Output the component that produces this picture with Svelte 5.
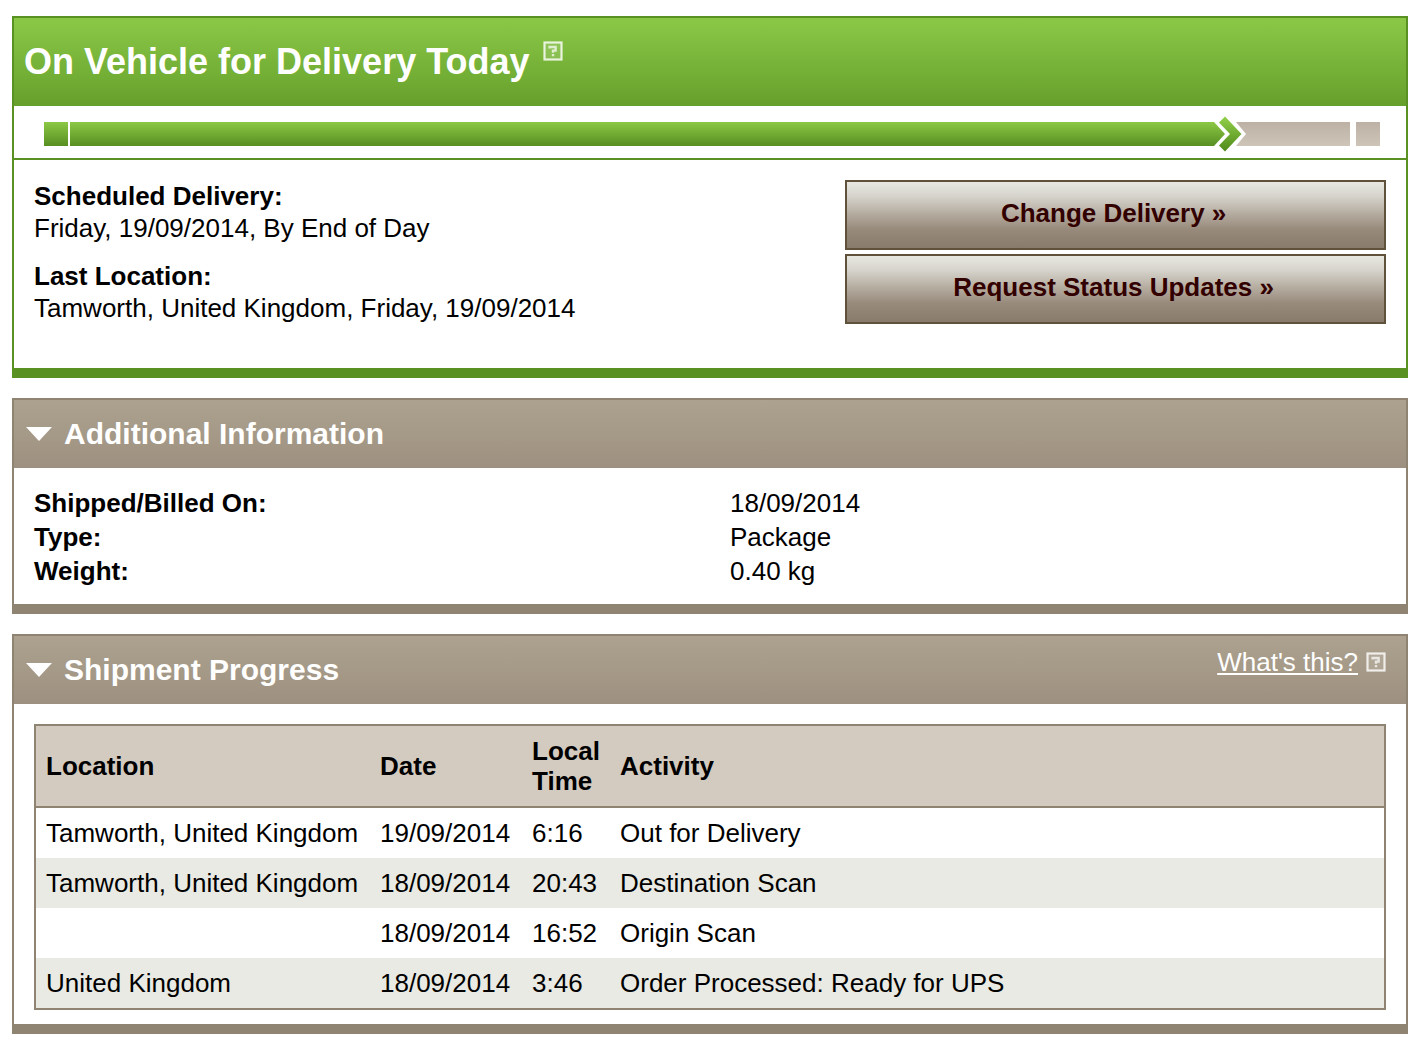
<script>
	let showInfo = $state(true);
	let showProgress = $state(true);

	const stepsDone = 11;
	const stepsLeft = 1;

	const info = [
		{ label: 'Shipped/Billed On:', value: '18/09/2014' },
		{ label: 'Type:', value: 'Package' },
		{ label: 'Weight:', value: '0.40 kg' }
	];

	const scans = [
		{ location: 'Tamworth, United Kingdom', date: '19/09/2014', time: '6:16', activity: 'Out for Delivery' },
		{ location: 'Tamworth, United Kingdom', date: '18/09/2014', time: '20:43', activity: 'Destination Scan' },
		{ location: '', date: '18/09/2014', time: '16:52', activity: 'Origin Scan' },
		{ location: 'United Kingdom', date: '18/09/2014', time: '3:46', activity: 'Order Processed: Ready for UPS' }
	];
</script>

{#snippet helpIcon()}
	<svg class="help-icon" viewBox="0 0 20 20" aria-hidden="true">
		<rect x="1.5" y="1.5" width="17" height="17" fill="#fff" fill-opacity="0.12" stroke="#fff" stroke-opacity="0.82" stroke-width="2.2" />
		<path d="M6.6 7.4V6h6v3.6H10v2.2M10 13v2.2" fill="none" stroke="#fff" stroke-opacity="0.72" stroke-width="2.4" />
	</svg>
{/snippet}

{#snippet caret(open)}
	<svg class="caret" class:closed={!open} viewBox="0 0 28 16" aria-hidden="true">
		<path d="M2 1h26L15 15z" fill="#fff" />
	</svg>
{/snippet}

<main>
	<section class="panel status">
		<header class="status-header">
			<h1>On Vehicle for Delivery Today</h1>
			<button class="help" aria-label="Help">{@render helpIcon()}</button>
		</header>

		<div class="track">
			<span class="segment done start"></span>
			<span class="segment done" style:flex-grow={stepsDone}></span>
			<svg class="arrow" viewBox="0 0 32 36" aria-hidden="true">
				<defs>
					<linearGradient id="bar" gradientUnits="userSpaceOnUse" x1="0" y1="6" x2="0" y2="30">
						<stop offset="0" stop-color="#8cc845" />
						<stop offset="1" stop-color="#578f21" />
					</linearGradient>
					<linearGradient id="chevron" x1="0" y1="0" x2="0" y2="1">
						<stop offset="0" stop-color="#92d04a" />
						<stop offset="1" stop-color="#4f891b" />
					</linearGradient>
					<linearGradient id="rest" gradientUnits="userSpaceOnUse" x1="0" y1="6" x2="0" y2="30">
						<stop offset="0" stop-color="#bdb1a5" />
						<stop offset="1" stop-color="#cec4b8" />
					</linearGradient>
				</defs>
				<path d="M0 6l11 12L0 30z" fill="url(#bar)" />
				<path d="M22 6h10v24H22l10-12z" fill="url(#rest)" />
				<path d="M11 .5L27.5 18 11 35.5 5 29.5 16 18 5 6.5z" fill="url(#chevron)" />
			</svg>
			<span class="segment left" style:flex-grow={stepsLeft}></span>
			<span class="segment left end"></span>
		</div>

		<div class="summary">
			<dl class="delivery">
				<div>
					<dt>Scheduled Delivery:</dt>
					<dd>Friday, 19/09/2014, By End of Day</dd>
				</div>
				<div>
					<dt>Last Location:</dt>
					<dd>Tamworth, United Kingdom, Friday, 19/09/2014</dd>
				</div>
			</dl>
			<div class="actions">
				<button>Change Delivery »</button>
				<button>Request Status Updates »</button>
			</div>
		</div>
	</section>

	<section class="panel">
		<header class="section-header">
			<h2>
				<button aria-expanded={showInfo} onclick={() => (showInfo = !showInfo)}>
					{@render caret(showInfo)}Additional Information
				</button>
			</h2>
		</header>
		{#if showInfo}
			<dl class="info">
				{#each info as row}
					<dt>{row.label}</dt>
					<dd>{row.value}</dd>
				{/each}
			</dl>
		{/if}
	</section>

	<section class="panel">
		<header class="section-header">
			<h2>
				<button aria-expanded={showProgress} onclick={() => (showProgress = !showProgress)}>
					{@render caret(showProgress)}Shipment Progress
				</button>
			</h2>
			<div class="whats-this">
				<a href="#help">What's this?</a>
				<button class="help" aria-label="Help">{@render helpIcon()}</button>
			</div>
		</header>
		{#if showProgress}
			<div class="progress">
				<table>
					<thead>
						<tr>
							<th class="location">Location</th>
							<th class="date">Date</th>
							<th class="time">Local Time</th>
							<th>Activity</th>
						</tr>
					</thead>
					<tbody>
						{#each scans as scan}
							<tr>
								<td>{scan.location}</td>
								<td>{scan.date}</td>
								<td>{scan.time}</td>
								<td>{scan.activity}</td>
							</tr>
						{/each}
					</tbody>
				</table>
			</div>
		{/if}
	</section>
</main>

<style>
	:global(body) {
		background: #fff;
	}

	main {
		display: flex;
		flex-direction: column;
		gap: 20px;
		padding: 16px 14px 12px 12px;
		font-family: 'Liberation Sans', Arial, sans-serif;
		font-size: 26px;
		line-height: 32px;
		color: #000;
	}

	h1,
	h2,
	dl,
	dd {
		margin: 0;
	}

	dt {
		font-weight: bold;
	}

	button {
		font: inherit;
		color: inherit;
		cursor: pointer;
	}

	.panel {
		border: 2px solid #8f8371;
		border-bottom-width: 10px;
	}

	.status {
		border-color: #5a9123;
	}

	.status-header {
		display: flex;
		align-items: flex-start;
		gap: 13px;
		padding: 23px 10px;
		background: linear-gradient(#8bc847, #66a02c);
		color: #fff;
	}

	h1 {
		font-size: 36px;
		line-height: 42px;
	}

	.help {
		display: block;
		padding: 0;
		border: 0;
		background: none;
	}

	.help-icon {
		display: block;
		width: 20px;
		height: 20px;
	}

	/* progress bar */
	.track {
		display: flex;
		align-items: center;
		padding: 10px 26px 6px 30px;
		border-bottom: 2px solid #5a9123;
	}

	.segment {
		flex: 0 1 0;
		height: 24px;
	}

	.done {
		background: linear-gradient(#8cc845, #578f21);
	}

	.left {
		background: linear-gradient(#bdb1a5, #cec4b8);
	}

	.start,
	.end {
		flex: 0 0 24px;
	}

	.start {
		margin-right: 2px;
	}

	.end {
		margin-left: 6px;
	}

	.arrow {
		flex: none;
		width: 32px;
		height: 36px;
	}

	.summary {
		display: flex;
		justify-content: space-between;
		gap: 20px;
		padding: 20px 20px 44px;
	}

	.delivery {
		display: flex;
		flex-direction: column;
		gap: 16px;
	}

	.actions {
		display: flex;
		flex-direction: column;
		gap: 4px;
		width: 40%;
	}

	.actions button {
		height: 70px;
		padding: 0 4px 4px 0;
		border: 2px solid #60513a;
		background: linear-gradient(#e8e8e1, #d5d3cb 22%, #b5aca0 48%, #978a7b 72%, #897b6b);
		color: #330000;
		font-weight: bold;
	}

	.section-header {
		display: flex;
		justify-content: space-between;
		align-items: flex-start;
		padding: 0 20px 0 10px;
		background: linear-gradient(#aca28f, #9e9080);
		color: #fff;
	}

	h2 {
		font-size: 30px;
		line-height: 68px;
	}

	h2 button {
		display: flex;
		align-items: center;
		gap: 12px;
		padding: 0;
		border: 0;
		background: none;
	}

	.caret {
		width: 28px;
		height: 16px;
	}

	.closed {
		transform: rotate(-90deg);
	}

	.whats-this {
		display: flex;
		align-items: center;
		gap: 8px;
		padding-top: 10px;
	}

	.whats-this a {
		color: #fff;
	}

	.info {
		display: grid;
		grid-template-columns: 1fr 1fr;
		padding: 18px 0 16px;
		line-height: 34px;
	}

	.info dt,
	.info dd {
		padding: 0 20px;
	}

	.progress {
		padding: 20px 20px 14px;
	}

	table {
		width: 100%;
		border: 2px solid #8f8371;
		border-spacing: 0;
		table-layout: fixed;
		line-height: 30px;
	}

	th,
	td {
		padding: 10px;
		text-align: left;
	}

	th {
		border-bottom: 2px solid #8f8371;
		background: #d4cbc0;
	}

	/* fixed layout counts the cell padding on top of these */
	.location {
		width: 314px;
	}

	.date {
		width: 132px;
	}

	.time {
		width: 68px;
	}

	tbody tr:nth-child(even) {
		background: #e9eae3;
	}
</style>
